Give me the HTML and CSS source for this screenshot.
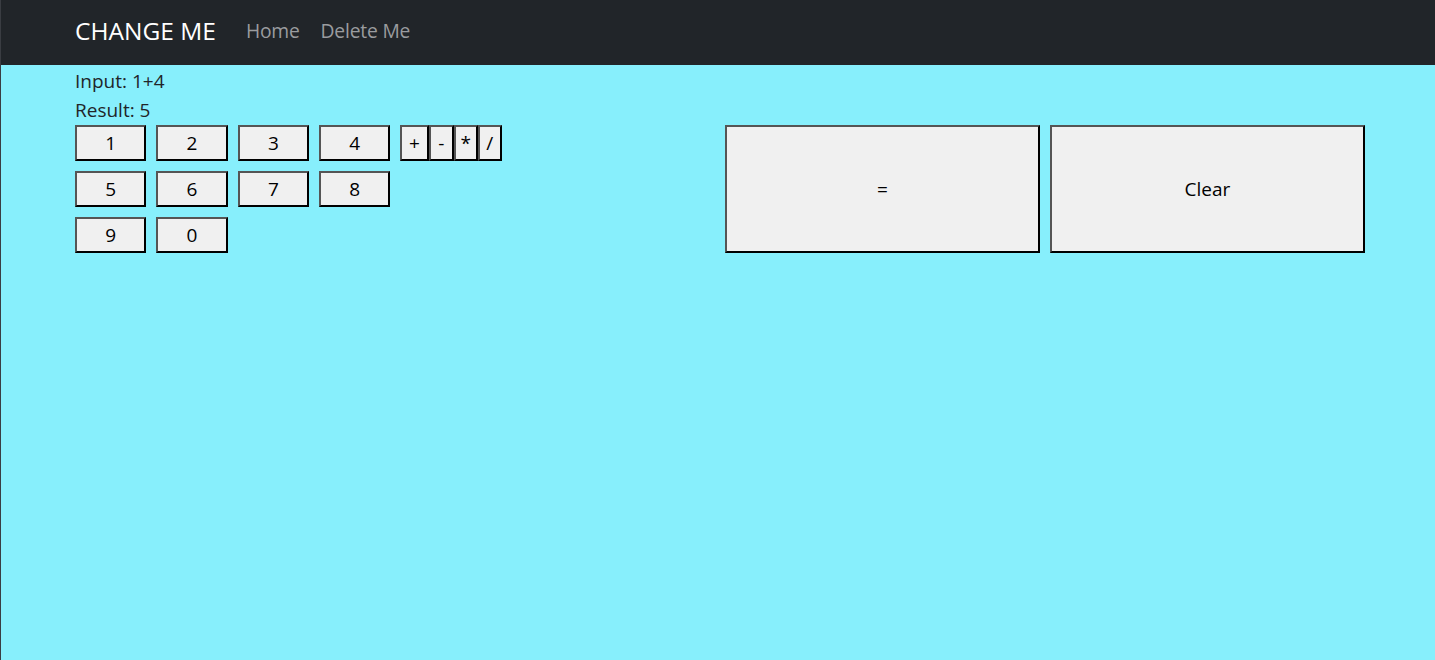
FILE: index.html
```html
<!DOCTYPE html>
<html lang="en">
<head>
<meta charset="utf-8">
<title>CHANGE ME</title>
<link rel="stylesheet" href="styles.css">
</head>
<body>
<nav class="navbar">
  <div class="nav-inner">
    <a class="brand" href="#">CHANGE ME</a>
    <a class="nav-link" href="#">Home</a>
    <a class="nav-link" href="#">Delete Me</a>
  </div>
</nav>
<main class="container">
  <p class="line">Input: 1+4</p>
  <p class="line">Result: 5</p>
  <div class="calc">
    <div class="keys">
      <div class="row">
        <button class="btn digit">1</button>
        <button class="btn digit">2</button>
        <button class="btn digit">3</button>
        <button class="btn digit">4</button>
        <div class="ops">
          <button class="btn op op-plus">+</button>
          <button class="btn op op-minus">-</button>
          <button class="btn op">*</button>
          <button class="btn op">/</button>
        </div>
      </div>
      <div class="row">
        <button class="btn digit">5</button>
        <button class="btn digit">6</button>
        <button class="btn digit">7</button>
        <button class="btn digit">8</button>
      </div>
      <div class="row">
        <button class="btn digit">9</button>
        <button class="btn digit">0</button>
      </div>
    </div>
    <div class="actions">
      <button class="btn big">=</button>
      <button class="btn big">Clear</button>
    </div>
  </div>
</main>
</body>
</html>
```

FILE: styles.css
```css
* { box-sizing: border-box; }

html, body {
  margin: 0;
  height: 100%;
}

body {
  background: #87effc;
  border-left: 1px solid #3a3d42;
  font-family: "Open Sans", "Noto Sans", sans-serif;
  font-size: 19px;
  color: #212529;
}

.navbar {
  background: #212529;
  height: 65px;
  display: flex;
  align-items: center;
  padding-bottom: 4px;
}

.nav-inner {
  margin-left: 74px;
  display: flex;
  align-items: center;
}

.brand {
  color: #ffffff;
  text-decoration: none;
  font-size: 24.5px;
  margin-right: 30px;
}

.nav-link {
  color: #9a9c9f;
  text-decoration: none;
  font-size: 19.3px;
  margin-right: 21px;
  letter-spacing: -0.2px;
}

.container {
  width: 1290px;
  margin-left: 74px;
}

.line {
  margin: 0;
  height: 30px;
  line-height: 30px;
}

.line:first-child {
  padding-top: 1px;
}

.calc {
  display: flex;
  gap: 10px;
}

.keys {
  flex: 1;
  display: flex;
  flex-direction: column;
  gap: 10px;
}

.row {
  display: flex;
  gap: 10px;
}

.ops {
  display: flex;
  margin-left: -0.5px;
}

.actions {
  flex: 1;
  display: flex;
  gap: 10px;
}

.btn {
  font-family: inherit;
  font-size: 19px;
  color: #000;
  background: #f0f0f0;
  border: 2px solid;
  border-color: #555555 #000000 #000000 #555555;
  border-radius: 0;
  padding: 0;
  margin: 0;
  height: 36px;
  line-height: 1;
}

.digit {
  width: 71.33px;
}

.op {
  width: 24px;
}

.op-plus { width: 29px; }
.op-minus { width: 25px; }

.big {
  flex: 1;
  height: 128px;
}
```
